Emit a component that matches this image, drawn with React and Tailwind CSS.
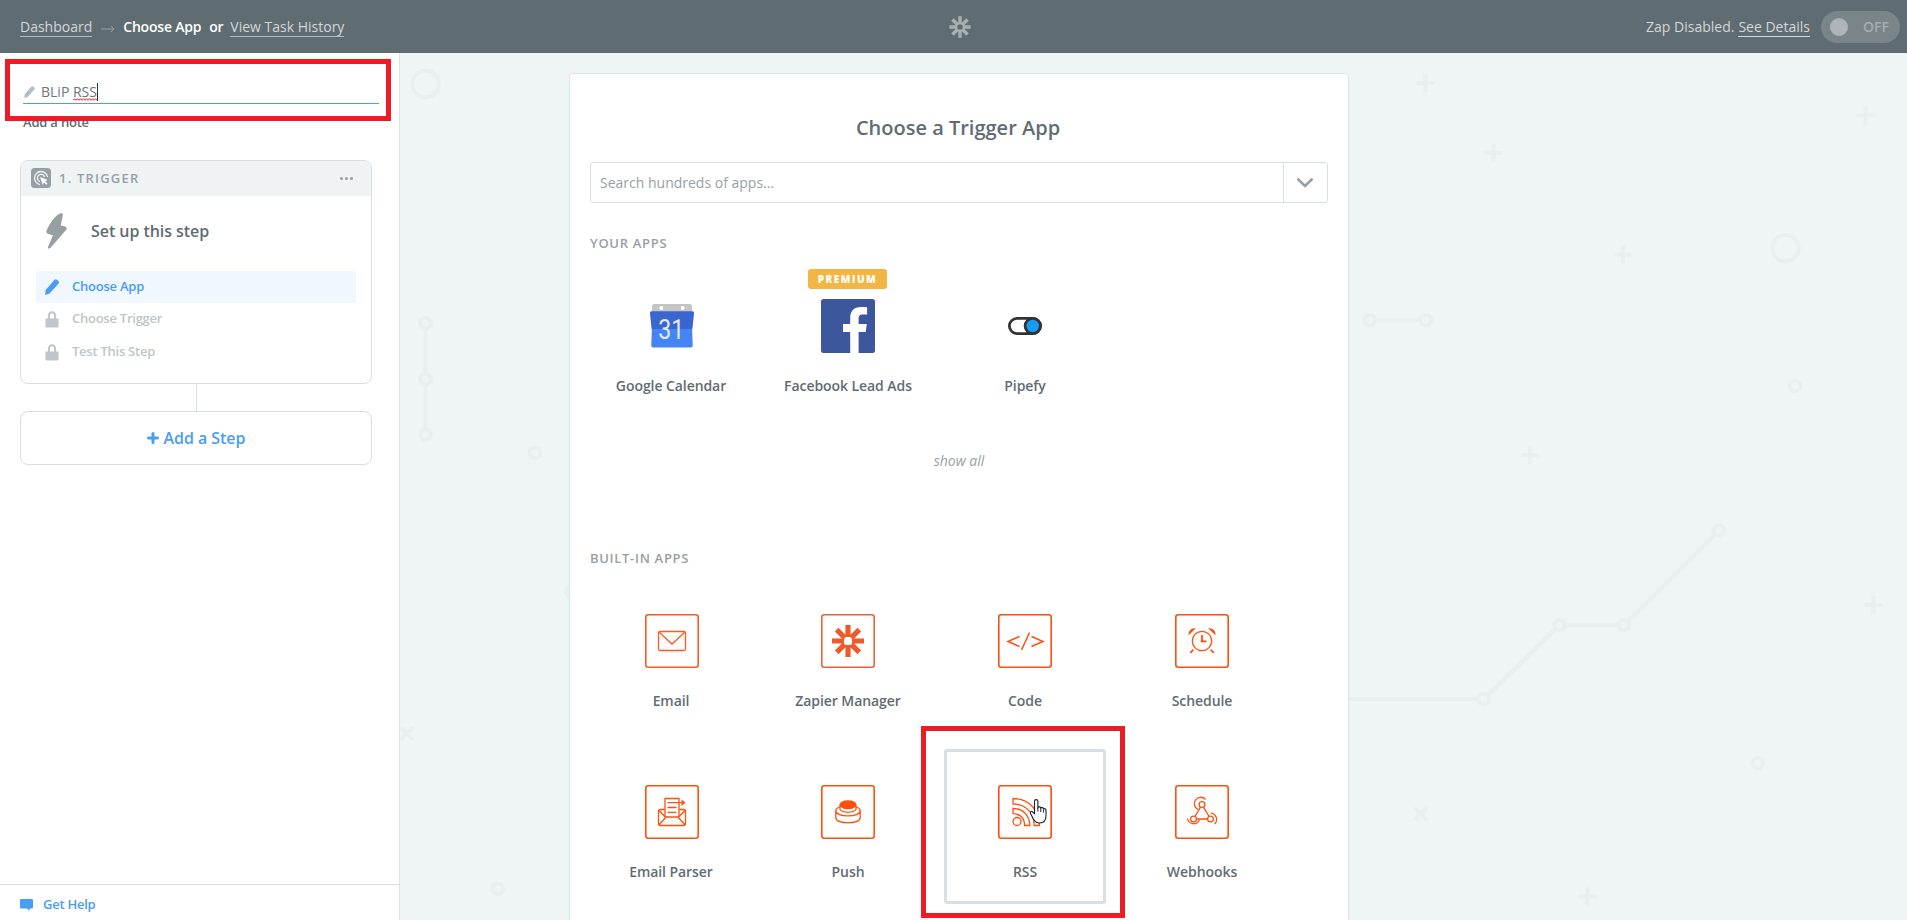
import React from "react";

const OPEN = "font-['Open_Sans','Noto_Sans',sans-serif]";

function ZapierMark({ className, hole }) {
  return (
    <svg viewBox="0 0 34 34" className={className} aria-hidden="true">
      <g stroke="currentColor" strokeWidth="5.4">
        <path d="M17 .5v33M.5 17h33M5.3 5.3l23.4 23.4M28.7 5.3L5.3 28.7" />
      </g>
      <rect x="13" y="13" width="8" height="8" rx="2.4" className={hole} />
    </svg>
  );
}

function PencilIcon({ className }) {
  return (
    <svg viewBox="0 0 14 16" className={className} fill="currentColor" aria-hidden="true">
      <path d="M.6 11L9.4 1.100a1.900 1.900 0 0 1 2.700-.1l1.200 1a1.900 1.900 0 0 1 .1 2.700L4.600 14.600.2 15.900z" />
    </svg>
  );
}

function LockIcon({ className }) {
  return (
    <svg viewBox="0 0 14 17" className={className} aria-hidden="true">
      <path d="M3.900 8V4.600a3.100 3.300 0 0 1 6.200 0V8" fill="none" stroke="currentColor" strokeWidth="2" />
      <rect x=".5" y="7.400" width="13" height="9" rx="1.200" fill="currentColor" />
    </svg>
  );
}

function Header() {
  return (
    <header className="flex h-[53px] shrink-0 items-center justify-between bg-[#5f6c72] pl-5 pr-[7px] text-sm text-[#d3d6d8]">
      <nav className="flex w-[600px] items-center">
        <a className="border-b border-[#b3b9bc] leading-[19px]">Dashboard</a>
        <svg viewBox="0 0 14 8" className="ml-[9px] mr-2 mt-1 h-2 w-[14px] text-[#98a1a5]" aria-hidden="true">
          <path d="M0 4h13M10 1.200L13 4l-3 2.800" fill="none" stroke="currentColor" strokeWidth="1" />
        </svg>
        <span className="font-semibold tracking-[-0.2px] text-white">Choose App</span>
        <span className="ml-2 font-semibold tracking-[-0.3px] text-white">or</span>
        <a className="ml-[7px] border-b border-[#b3b9bc] leading-[19px]">View Task History</a>
      </nav>
      <ZapierMark className="h-[22px] w-[22px] text-[#a8afb2]" hole="fill-[#5f6c72]" />
      <div className="flex w-[600px] items-center justify-end">
        <span>Zap Disabled.</span>
        <a className="ml-1 border-b border-[#d3d6d8] leading-[19px]">See Details</a>
        <div className="ml-[11px] flex h-8 w-[79px] items-center justify-between rounded-full bg-[#7a8589] pl-[9px] pr-[11px]">
          <span className="h-[18px] w-[18px] rounded-full bg-[#afb4b8]" />
          <span className="font-semibold text-[#a6adb1]">OFF</span>
        </div>
      </div>
    </header>
  );
}

function StepRow({ icon, label, active }) {
  return (
    <li
      className={
        active
          ? "flex h-8 items-center rounded-[3px] bg-[#f0f7ff] pl-[9px] text-[13px] font-semibold tracking-[-0.23px] text-[#499df3]"
          : "flex h-8 items-center pl-[9px] text-[13px] font-semibold tracking-[-0.25px] text-[#bec5cb]"
      }
    >
      <span className="flex w-[27px]">{icon}</span>
      {label}
    </li>
  );
}

function Sidebar() {
  return (
    <aside className="flex w-[400px] shrink-0 flex-col border-r border-[#dfe2e5] bg-white">
      <div className="relative ml-[23px] mt-[25px] w-[356px]">
        <div className="flex h-[26px] items-center border-b border-[#499df3] pt-[2px]">
          <PencilIcon className="ml-px h-3 w-[11px] text-[#b5bbbe]" />
          <span className="ml-[6px] text-sm text-[#6b757a]">
            BLiP{" "}
            <span className="relative">
              RSS
              <svg viewBox="0 0 24 3" className="absolute bottom-0 left-0 h-[3px] w-6" aria-hidden="true">
                <path
                  d="M0 2.300L1.500.7 3 2.300 4.500.7 6 2.300 7.500.7 9 2.300 10.500.7 12 2.300 13.500.7 15 2.300 16.500.7 18 2.300 19.500.7 21 2.300 22.500.7 24 2.300"
                  fill="none"
                  stroke="#f01414"
                  strokeWidth="1"
                />
              </svg>
            </span>
          </span>
          <span className="h-[18px] w-px bg-[#333]" />
        </div>
        <div className="absolute -left-[18px] -top-[19px] h-[62px] w-[386px] border-[5px] border-[#ed1c24]" />
      </div>
      <p className="ml-[23px] mt-[9px] text-[13px] font-semibold leading-[18px] tracking-[-0.2px] text-[#5f6c72]">Add a note</p>

      <section className="ml-5 mt-[29px] h-[224px] w-[352px] overflow-hidden rounded-lg border border-[#d8dfe2]">
        <div className="flex h-[35px] items-center bg-[#eff3f4] pb-px pl-[10px] pr-[18px]">
          <svg viewBox="0 0 20 20" className="h-5 w-5" aria-hidden="true">
            <rect width="20" height="20" rx="3.500" fill="#989fa4" />
            <g fill="none" stroke="#eff3f4" strokeWidth="1.300">
              <path d="M9 16.600A6.600 6.600 0 1 1 16.600 9" />
              <path d="M9 13.600A3.700 3.700 0 1 1 13.600 9" />
            </g>
            <path d="M9 9l7.600 3-2.400 1.300 2.300 2.300-1.200 1.200-2.300-2.300L11.800 17z" fill="#fff" />
          </svg>
          <h2 className="ml-2 flex-1 text-[13px] font-semibold leading-[18px] tracking-[1.2px] text-[#989fa4]">1. TRIGGER</h2>
          <span className="flex gap-[2px]">
            <i className="h-[3px] w-[3px] rounded-full bg-[#989fa4]" />
            <i className="h-[3px] w-[3px] rounded-full bg-[#989fa4]" />
            <i className="h-[3px] w-[3px] rounded-full bg-[#989fa4]" />
          </span>
        </div>
        <div className="flex h-[70px] items-center pl-[25px]">
          <svg viewBox="0 0 61 106" className="h-9 w-[21px] text-[#979fa3]" fill="currentColor" aria-hidden="true">
            <path d="M34 5Q51 -4 49 7L43 37L56 40Q64 43 58 51L13 102Q3 109 6 99L20 66L5 61Q-2 58 2 50Q14 22 34 5z" />
          </svg>
          <span className="ml-[24px] text-base font-semibold tracking-[-0.05px] text-[#5f6c72]">Set up this step</span>
        </div>
        <ul className="mx-[15px] mt-[5px] flex flex-col">
          <StepRow active icon={<PencilIcon className="h-4 w-[14px]" />} label="Choose App" />
          <StepRow icon={<LockIcon className="h-[17px] w-[14px]" />} label="Choose Trigger" />
          <div className="h-px" />
          <StepRow icon={<LockIcon className="h-[17px] w-[14px]" />} label="Test This Step" />
        </ul>
      </section>
      <div className="ml-[196px] h-[27px] w-px bg-[#d8dfe2]" />
      <button className="ml-5 flex h-[54px] w-[352px] items-center justify-center rounded-lg border border-[#d8dfe2] pb-px text-base font-semibold text-[#499df3]">
        <svg viewBox="0 0 12 12" className="mr-[5px] h-3 w-3" aria-hidden="true">
          <path d="M6 1.500v9M1.500 6h9" stroke="currentColor" strokeWidth="3" strokeLinecap="round" />
        </svg>
        <span className="tracking-[-0.05px]">Add a Step</span>
      </button>
      <footer className="mt-auto flex h-[36px] items-center border-t border-[#d8dfe2] pl-5 pt-1 text-[13px] font-semibold tracking-[-0.25px] text-[#499df3]">
        <svg viewBox="0 0 13 12" className="mr-[10px] h-3 w-[13px]" fill="currentColor" aria-hidden="true">
          <path d="M1.200 0h10.600A1.200 1.200 0 0 1 13 1.200v7.100a1.200 1.200 0 0 1-1.200 1.200H9.600V12L7 9.500H1.200A1.200 1.200 0 0 1 0 8.300V1.200A1.200 1.200 0 0 1 1.200 0z" />
        </svg>
        Get Help
      </footer>
    </aside>
  );
}

const PLUSES = [[1425.5, 83], [1865.5, 115.5], [1493.5, 153], [1623, 254.5], [1530, 455], [1873.5, 605], [1587.5, 896.5]];
const CROSSES = [[406.8, 733.7], [1420.7, 814]];
const NODES = [
  [425.5, 323], [425.5, 379], [425.5, 434.5], [535, 453], [571.5, 592], [497.6, 888.7],
  [1369.7, 320.3], [1425.7, 320.3], [1795, 386], [1483.6, 699], [1559.5, 625.3], [1623.9, 625.3], [1718.7, 530.5], [1757.7, 763],
];

function Backdrop() {
  return (
    <svg viewBox="400 53 1507 867" className="absolute inset-0 h-[867px] w-[1507px]" fill="none" stroke="#e9eeee" strokeWidth="4" strokeLinecap="round" aria-hidden="true">
      {PLUSES.map(([x, y]) => (
        <path key={x} d={`M${x - 7.5} ${y}h15M${x} ${y - 7.5}v15`} />
      ))}
      {CROSSES.map(([x, y]) => (
        <path key={x} d={`M${x - 5} ${y - 5}l10 10M${x + 5} ${y - 5}l-10 10`} />
      ))}
      <path d="M425.500 330v42M425.500 386v41.500M1376.500 320.300h42.500M1340 699h137M1488.500 694.500l66-64.500M1566.500 625.300h50.500M1629 620.500l85-85" />
      {NODES.map(([x, y]) => (
        <circle key={`${x}-${y}`} cx={x} cy={y} r="5.300" />
      ))}
      <circle cx="425.500" cy="84" r="13.300" />
      <circle cx="1785.500" cy="248.300" r="13.300" />
    </svg>
  );
}

function Framed({ children, color = "#ff4f0f" }) {
  return (
    <svg viewBox="0 0 54 54" className="h-[54px] w-[54px]" fill="none" stroke={color} strokeWidth="1.300" aria-hidden="true">
      <rect x=".8" y=".8" width="52.400" height="52.400" rx="2.500" strokeWidth="1.600" />
      {children}
    </svg>
  );
}

const icons = {
  calendar: (
    <svg viewBox="0 0 44 44" className="h-11 w-11" aria-hidden="true">
      <path d="M4.500 0h35a2.500 2.500 0 0 1 2.500 2.500V9H2V2.500A2.500 2.500 0 0 1 4.500 0z" fill="#c5c5c5" />
      <circle cx="11.300" cy="4" r="1.900" fill="#fff" />
      <circle cx="32.700" cy="4" r="1.900" fill="#fff" />
      <path d="M2 7.300h40a2 2 0 0 1 2 2.300L42.400 25H1.600L0 9.600a2 2 0 0 1 2-2.300z" fill="#3a66d1" />
      <path d="M1.900 25h40.200l.6 16a2.300 2.300 0 0 1-2.300 2.500H3.600A2.300 2.300 0 0 1 1.300 41z" fill="#4485f3" />
      <text x="21.300" y="35" textAnchor="middle" fontFamily="Roboto, sans-serif" fontSize="27" fontWeight="400" textLength="26" lengthAdjust="spacingAndGlyphs" fill="#e6eaf2">31</text>
    </svg>
  ),
  facebook: (
    <svg viewBox="0 0 54 54" className="h-[54px] w-[54px]" aria-hidden="true">
      <rect width="54" height="54" rx="2.500" fill="#3d579d" />
      <path d="M29.200 54V33H22v-8h7.200v-6.300c0-7 4.200-10.800 10.500-10.800 3 0 5.600.2 6.400.3v7.400h-4.400c-3.400 0-4.100 1.700-4.100 4.100V25h8.200l-1.100 8h-7.100v21z" fill="#fff" />
    </svg>
  ),
  pipefy: (
    <svg viewBox="0 0 34 18" className="h-[18px] w-[34px]" aria-hidden="true">
      <rect x="1.400" y="1.400" width="31.200" height="15.200" rx="7.600" fill="#fff" stroke="#323232" strokeWidth="2.800" />
      <circle cx="24.700" cy="9" r="7.600" fill="#159bff" stroke="#323232" strokeWidth="2.800" />
    </svg>
  ),
  email: (
    <Framed color="#ff5a1f">
      <rect x="13.500" y="17.500" width="27" height="19" rx="1.500" />
      <path d="M14 18l13 12 13-12" />
    </Framed>
  ),
  zapier: (
    <Framed color="#f0603a">
      <path d="M27 11v32M11 27h32M15.700 15.700l22.600 22.600M38.300 15.700L15.700 38.300" stroke="#ee5a2b" strokeWidth="5.200" />
      <rect x="23" y="23" width="8" height="8" rx="2.500" fill="#fff" stroke="none" />
    </Framed>
  ),
  code: (
    <Framed>
      <path d="M21.500 22.500L10 27.500l11.500 5M33.500 22.500l11.500 5-11.500 5M31.500 18.500l-8 17.500" strokeWidth="1.500" />
    </Framed>
  ),
  schedule: (
    <Framed>
      <circle cx="27" cy="27" r="9.700" />
      <path d="M27 21v6.300h4.500" strokeWidth="1.800" />
      <circle cx="27" cy="27" r="1.300" fill="#ff4f0f" stroke="none" />
      <path d="M18.300 35.600l-3 3.200M35.700 35.600l3 3.200" strokeWidth="1.700" />
      <path d="M14.200 19.800c0-2.800 2.300-4.700 5-4.800zM39.800 19.800c0-2.800-2.300-4.700-5-4.800z" fill="#ff4f0f" />
    </Framed>
  ),
  parser: (
    <Framed>
      <path d="M19.700 24.500h-4.200q-2 0-2 2v12q0 2 2 2h23q2 0 2-2v-12q0-2-2-2h-4.200M14 25.500l6.500 6.500h13l6.500-6.500M14 40l7-8M40 40l-7-8" />
      <path d="M20 32V13.500h14V32M22.500 17.700h14M22.500 22.500h9M22.500 27.300h9" />
      <path d="M36.500 14.500l4 3.200-4 3.200z" fill="#ff4f0f" stroke="none" />
    </Framed>
  ),
  push: (
    <Framed>
      <ellipse cx="27" cy="19.800" rx="8" ry="3.800" fill="#ff4f0f" />
      <path d="M19 20v4.500c2.500 3.700 13.500 3.700 16 0V20M18.800 22c-2.500.8-4 1.800-4 3.700v7.500c2 6 22.400 6 24.400 0v-7.500c0-1.900-1.500-2.900-4-3.700M14.800 26c2 6.500 22.400 6.500 24.400 0" />
    </Framed>
  ),
  rss: (
    <Framed>
      <circle cx="19" cy="36.500" r="4" />
      <path d="M15 13.500c15 0 26.500 11 26.500 27h-5.300C36.200 27.500 27.500 19 15 19zM15 23.500c10 0 16.800 7 16.800 17h-5.200C26.600 33 22 28.700 15 28.700z" />
    </Framed>
  ),
  webhooks: (
    <Framed>
      <circle cx="27" cy="19.500" r="2.900" />
      <circle cx="18.500" cy="34" r="2.900" />
      <circle cx="35.500" cy="34" r="2.900" />
      <path d="M25.500 22.200l-5.600 9.300M28.500 22.200l5.600 9.300M21.500 34h11M23 24.500a6.400 6.400 0 1 1 7.500-10M12.500 33.500a6.200 6.200 0 0 0 11.800 1.500M39.500 39a6.200 6.200 0 0 0-3.500-10.800" />
    </Framed>
  ),
};

function HandCursor() {
  return (
    <svg viewBox="0 0 18 25" className="absolute left-[85px] top-[50px] h-[25px] w-[18px]" aria-hidden="true">
      <path
        d="M5.500 14.500V2.300a1.700 1.700 0 0 1 3.400 0v6.200c.6-1 2.600-.8 2.900.6.600-.9 2.500-.7 2.800.8.800-.7 2.400-.2 2.400 1.400v5.200c0 5-2.500 7.500-6.500 7.500-3.500 0-4.800-1.500-6.200-4.300L1.500 14.500c-.8-1.600 1-2.700 2.200-1.500z"
        fill="#fff"
        stroke="#1b2033"
        strokeWidth="1.100"
      />
      <path d="M8.900 8.500v4M11.800 9.500v3.500M14.600 10.500v3" stroke="#1b2033" strokeWidth="1" />
    </svg>
  );
}

function AppTile({ icon, label, premium, hovered, first }) {
  return (
    <div className="relative flex h-[155px] flex-col items-center pt-9">
      {hovered && <div className="absolute inset-0 rounded-[3px] border-[3px] border-[#d9dfe2]" />}
      {premium && (
        <span className="absolute left-[41px] top-[6px] flex h-5 w-[79px] items-center justify-center rounded-[3px] bg-[#f3b643] text-[10px] font-extrabold tracking-[1.5px] text-white">
          PREMIUM
        </span>
      )}
      <div className={first ? "ml-[2px] flex h-[54px] items-center" : "flex h-[54px] items-center"}>{icons[icon]}</div>
      <span className="mt-[23px] text-sm font-semibold tracking-[-0.07px] text-[#5f6c72]">{label}</span>
      {hovered && <HandCursor />}
      {hovered && <div className="absolute -left-[23px] -top-[23px] h-[192px] w-[204px] border-[5px] border-[#ed1c24]" />}
    </div>
  );
}

function SectionTitle({ children }) {
  return <h3 className="text-[13px] font-semibold leading-[18px] tracking-[0.7px] text-[#989fa4]">{children}</h3>;
}

function AppPicker() {
  return (
    <section className="relative ml-[169px] mt-5 flex w-[780px] shrink-0 flex-col rounded-t border border-b-0 border-[#dfe4e6] bg-white px-5">
      <h1 className="mt-10 pr-[2px] text-center text-xl font-semibold leading-7 text-[#5f6c72]">Choose a Trigger App</h1>
      <div className="mt-5 flex h-[41px] w-[738px] rounded-[3px] border border-[#d8dfe2]">
        <span className="flex flex-1 items-center pl-[9px] text-sm text-[#989fa4]">Search hundreds of apps...</span>
        <span className="flex w-[44px] items-center justify-center border-l border-[#d8dfe2] pr-[2px]">
          <svg viewBox="0 0 16 10" className="h-[10px] w-4" aria-hidden="true">
            <path d="M1.300 1.500L8 8l6.700-6.500" fill="none" stroke="#989fa4" strokeWidth="2.600" strokeLinecap="round" />
          </svg>
        </span>
      </div>
      <div className="mt-[31px]"><SectionTitle>YOUR APPS</SectionTitle></div>
      <div className="mt-[11px] grid w-[693px] grid-cols-4 gap-x-[15px]">
        <AppTile first icon="calendar" label="Google Calendar" />
        <AppTile icon="facebook" label="Facebook Lead Ads" premium />
        <AppTile icon="pipefy" label="Pipefy" />
      </div>
      <p className="mt-[33px] text-center text-sm italic leading-5 text-[#989fa4]">show all</p>
      <div className="mt-[78px]"><SectionTitle>BUILT-IN APPS</SectionTitle></div>
      <div className="mt-[11px] grid w-[693px] grid-cols-4 gap-x-[15px] gap-y-4">
        <AppTile first icon="email" label="Email" />
        <AppTile icon="zapier" label="Zapier Manager" />
        <AppTile icon="code" label="Code" />
        <AppTile icon="schedule" label="Schedule" />
        <AppTile first icon="parser" label="Email Parser" />
        <AppTile icon="push" label="Push" />
        <AppTile icon="rss" label="RSS" hovered />
        <AppTile icon="webhooks" label="Webhooks" />
      </div>
    </section>
  );
}

export default function App() {
  return (
    <div className={`${OPEN} flex h-[920px] w-[1907px] flex-col overflow-hidden`}>
      <Header />
      <div className="flex h-[867px]">
        <Sidebar />
        <main className="relative flex flex-1 overflow-hidden bg-[#eff4f5]">
          <Backdrop />
          <AppPicker />
        </main>
      </div>
    </div>
  );
}
